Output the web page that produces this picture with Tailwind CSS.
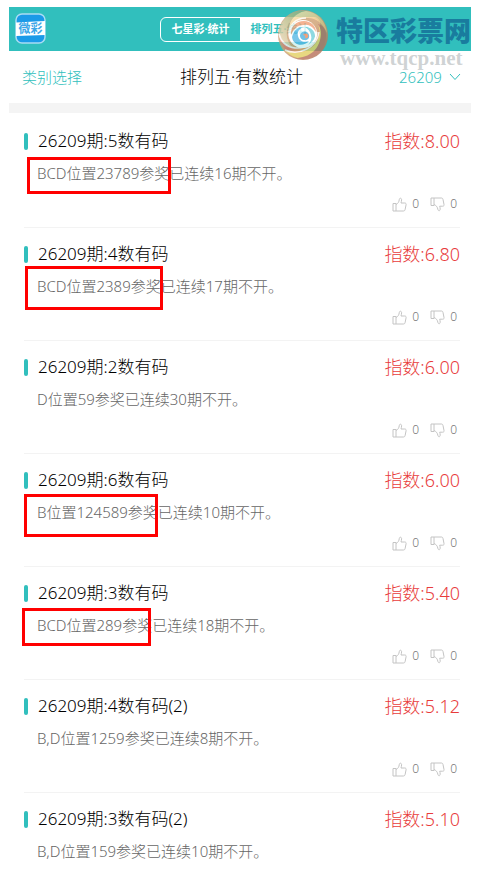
<!DOCTYPE html>
<html lang="zh-CN">
<head>
  <meta charset="utf-8" />
  <meta name="viewport" content="width=device-width, initial-scale=1" />
  <title>排列五·有数统计</title>
  <script src="https://cdn.jsdelivr.net/npm/@tailwindcss/browser@4"></script>
</head>
<body class="bg-white px-[9px] pt-[7px] font-['Noto_Sans','Noto_Sans_CJK_SC',sans-serif] font-light text-black">
  <svg class="hidden">
    <symbol id="up" viewBox="0 0 15 15">
      <path d="M1 6.500h3v7.500H1zM4 7.500c2-1 3-2.500 3.300-5C7.500.7 9.600.8 9.600 2.800c0 1.200-.4 2.200-.6 3.200h3.700c1.200 0 1.600.8 1.400 1.700l-1 4.800c-.2 1-.8 1.500-1.700 1.500H4" fill="none" stroke="currentColor" />
    </symbol>
    <symbol id="down" viewBox="0 0 15 15">
      <path d="M1 1h3v7.500H1zM4 7.500c2 1 3.300 2 3.800 4.500.3 2.400 2.400 2.200 2.400 0 0-1-.3-1.800-.5-2.800h3c1.200 0 1.500-.8 1.300-1.700l-1-5C12.800 1.500 12.300 1 11.400 1H4" fill="none" stroke="currentColor" />
    </symbol>
  </svg>

  <header class="relative flex h-11 items-center justify-center bg-[#31bfbd]">
    <a href="#" aria-label="微彩" class="absolute left-[6px] top-[6px]">
      <svg class="size-[31px]" viewBox="0 0 31 31">
        <rect x="1" y="1" width="29" height="29" rx="6" fill="#1b9ae8" stroke="#a9dcf3" stroke-width="1.500" />
        <path d="M1 9.500L30 8v14L1 23z" fill="#fff" />
        <text x="15.500" y="20" text-anchor="middle" font-size="12" font-weight="700" fill="#3ba6e8" font-family="Noto Sans CJK SC, sans-serif">微彩</text>
      </svg>
    </a>
    <nav class="flex h-[25px] w-40 overflow-hidden rounded-md border border-white text-[11px] font-bold">
      <a href="#" class="flex flex-1 items-center justify-center text-white">七星彩·统计</a>
      <a href="#" class="flex flex-1 items-center justify-center bg-white text-[#31bfbd]">排列五·统计</a>
    </nav>

    <div class="absolute right-0 top-[2px] flex gap-2 whitespace-nowrap">
      <svg class="h-[53px] w-[52px] opacity-80" viewBox="0 0 52 53">
        <defs>
          <linearGradient id="ring" x1="0" y1="0" x2="1" y2="1">
            <stop offset="0" stop-color="#c99a7c" />
            <stop offset=".5" stop-color="#cfa070" />
            <stop offset="1" stop-color="#a8604c" />
          </linearGradient>
          <linearGradient id="green" x1="0" y1="1" x2="1" y2="0">
            <stop offset="0" stop-color="#f3d9b8" />
            <stop offset=".6" stop-color="#b5b983" />
            <stop offset="1" stop-color="#8fae7f" />
          </linearGradient>
          <linearGradient id="red" x1="0" y1="0" x2="1" y2="1">
            <stop offset="0" stop-color="#f4a58c" />
            <stop offset=".5" stop-color="#e8735f" />
            <stop offset="1" stop-color="#f0cf5a" />
          </linearGradient>
          <linearGradient id="gold" x1="0" y1="0" x2="1" y2="1">
            <stop offset="0" stop-color="#fbe9b0" />
            <stop offset="1" stop-color="#e9a863" />
          </linearGradient>
        </defs>
        <ellipse cx="27" cy="26" rx="25" ry="25" fill="url(#ring)" />
        <path d="M3 22C5 9 17 0 30 2c-11 3-18 10-19 20-1 6 1 12 5 16C8 36 3 30 3 22z" fill="url(#green)" />
        <path d="M30 2c11 1 20 10 21 22-4-10-12-16-21-15-10 1-17 8-17 17-2-12 5-22 17-24z" fill="url(#gold)" />
        <path d="M3 25c2 8 8 13 16 14 9 1 16-3 19-9-1 9-8 15-17 15C11 45 4 37 3 25z" fill="url(#red)" />
        <path d="M9 41c12 6 27 2 33-11 2-5 2-10 0-14 6 6 7 16 2 24-8 12-25 13-35 1z" fill="#e3cf62" />
        <path d="M50 24c1 14-8 25-22 26-3 0-6 0-9-1 15 0 25-9 26-24 0-4-1-7-3-10 5 1 7 5 8 9z" fill="#b7705a" />
        <circle cx="27" cy="25" r="14" fill="#fff" />
        <path d="M15 26c-1-8 5-14 13-14 7 0 12 5 12 11-3-5-7-8-12-7-7 0-11 5-13 10z" fill="#f2a077" />
        <path d="M16 28c2-7 6-10 11-10-4 2-6 5-5 9 1 5 6 7 11 5-5 6-16 5-17-4z" fill="#58b9e4" />
        <path d="M29 18c6 0 10 4 10 9 0 4-3 8-7 9 3-3 4-7 3-10-1-4-3-6-6-8z" fill="#72d0dc" />
        <path d="M24 27c0-4 5-6 8-3 3 4 0 8-4 7-2 0-4-2-4-4z" fill="#4fb3e0" />
        <path d="M27 26c1-2 4-2 5 0s-1 4-3 3c1-1 0-3-2-3z" fill="#f08a5a" />
        <path d="M30 9c-10 0-18 7-17 17 1 8 8 13 15 12M3 25c2 8 8 13 16 14 12 1 21-6 22-16M9 41c14 6 32-2 34-18" fill="none" stroke="#fff" stroke-width="1.500" stroke-opacity=".85" />
      </svg>
      <div>
        <p class="pt-[7px] text-[27px] font-black leading-[30px] text-[#197c9e]">特区彩票网</p>
        <p class="mt-[2px] pl-1 font-['Liberation_Serif',serif] text-[21px] font-bold leading-5 text-[#c9cdce]/90">www.tqcp.net</p>
      </div>
    </div>
  </header>

  <div class="grid h-[52px] grid-cols-[1fr_auto_1fr] items-center pl-[13px] pr-[10px] text-[15px] text-[#31bfbd]">
    <button type="button" class="justify-self-start">类别选择</button>
    <h1 class="text-[17px] text-black">排列五·有数统计</h1>
    <label class="relative flex items-center justify-self-end">
      <select aria-label="期号" class="w-[62px] appearance-none bg-transparent">
        <option>26209</option>
      </select>
      <svg class="pointer-events-none absolute right-0 h-2 w-3" viewBox="0 0 12 8"><path d="M1 1l5 5.500L11 1" fill="none" stroke="currentColor" /></svg>
    </label>
  </div>
  <div class="h-[10px] bg-[#f4f4f4]"></div>

  <main class="pl-[15px] pr-[11px]">
    <article class="h-[115px] border-b border-[#f3f3f3] pt-4">
      <div class="flex h-6 items-center">
        <span class="h-[17px] w-1 rounded-sm bg-[#31bfbd]"></span>
        <h2 class="ml-[10px] flex-1 text-[17px]">26209期:5数有码</h2>
        <span class="text-[18px] text-[#e83c3c]">指数:8.00</span>
      </div>
      <div class="relative mt-2 pl-[13px] text-[15px] leading-6 text-[#666]">
        <p>BCD位置23789参奖已连续16期不开。</p>
        <span class="absolute left-[3px] -top-1 h-[37px] w-36 border-3 border-[#f00]"></span>
      </div>
      <div class="mt-[11px] flex items-center justify-end gap-[11px] pr-[3px] text-xs text-[#777]">
        <button type="button" aria-label="赞" class="flex items-center gap-[5px]"><svg class="size-[15px] text-[#c4c4c4]"><use href="#up" /></svg>0</button>
        <button type="button" aria-label="踩" class="flex items-center gap-[5px]"><svg class="size-[15px] text-[#c4c4c4]"><use href="#down" /></svg>0</button>
      </div>
    </article>

    <article class="h-[113px] border-b border-[#f3f3f3] pt-[14px]">
      <div class="flex h-6 items-center">
        <span class="h-[17px] w-1 rounded-sm bg-[#31bfbd]"></span>
        <h2 class="ml-[10px] flex-1 text-[17px]">26209期:4数有码</h2>
        <span class="text-[18px] text-[#e83c3c]">指数:6.80</span>
      </div>
      <div class="relative mt-2 pl-[13px] text-[15px] leading-6 text-[#666]">
        <p>BCD位置2389参奖已连续17期不开。</p>
        <span class="absolute left-px -top-2 h-11 w-[138px] border-3 border-[#f00]"></span>
      </div>
      <div class="mt-[11px] flex items-center justify-end gap-[11px] pr-[3px] text-xs text-[#777]">
        <button type="button" aria-label="赞" class="flex items-center gap-[5px]"><svg class="size-[15px] text-[#c4c4c4]"><use href="#up" /></svg>0</button>
        <button type="button" aria-label="踩" class="flex items-center gap-[5px]"><svg class="size-[15px] text-[#c4c4c4]"><use href="#down" /></svg>0</button>
      </div>
    </article>

    <article class="h-[113px] border-b border-[#f3f3f3] pt-[14px]">
      <div class="flex h-6 items-center">
        <span class="h-[17px] w-1 rounded-sm bg-[#31bfbd]"></span>
        <h2 class="ml-[10px] flex-1 text-[17px]">26209期:2数有码</h2>
        <span class="text-[18px] text-[#e83c3c]">指数:6.00</span>
      </div>
      <div class="mt-2 pl-[13px] text-[15px] leading-6 text-[#666]">
        <p>D位置59参奖已连续30期不开。</p>
      </div>
      <div class="mt-[11px] flex items-center justify-end gap-[11px] pr-[3px] text-xs text-[#777]">
        <button type="button" aria-label="赞" class="flex items-center gap-[5px]"><svg class="size-[15px] text-[#c4c4c4]"><use href="#up" /></svg>0</button>
        <button type="button" aria-label="踩" class="flex items-center gap-[5px]"><svg class="size-[15px] text-[#c4c4c4]"><use href="#down" /></svg>0</button>
      </div>
    </article>

    <article class="h-[113px] border-b border-[#f3f3f3] pt-[14px]">
      <div class="flex h-6 items-center">
        <span class="h-[17px] w-1 rounded-sm bg-[#31bfbd]"></span>
        <h2 class="ml-[10px] flex-1 text-[17px]">26209期:6数有码</h2>
        <span class="text-[18px] text-[#e83c3c]">指数:6.00</span>
      </div>
      <div class="relative mt-2 pl-[13px] text-[15px] leading-6 text-[#666]">
        <p>B位置124589参奖已连续10期不开。</p>
        <span class="absolute left-0 -top-[6px] h-[43px] w-[134px] border-3 border-[#f00]"></span>
      </div>
      <div class="mt-[11px] flex items-center justify-end gap-[11px] pr-[3px] text-xs text-[#777]">
        <button type="button" aria-label="赞" class="flex items-center gap-[5px]"><svg class="size-[15px] text-[#c4c4c4]"><use href="#up" /></svg>0</button>
        <button type="button" aria-label="踩" class="flex items-center gap-[5px]"><svg class="size-[15px] text-[#c4c4c4]"><use href="#down" /></svg>0</button>
      </div>
    </article>

    <article class="h-[113px] border-b border-[#f3f3f3] pt-[14px]">
      <div class="flex h-6 items-center">
        <span class="h-[17px] w-1 rounded-sm bg-[#31bfbd]"></span>
        <h2 class="ml-[10px] flex-1 text-[17px]">26209期:3数有码</h2>
        <span class="text-[18px] text-[#e83c3c]">指数:5.40</span>
      </div>
      <div class="relative mt-2 pl-[13px] text-[15px] leading-6 text-[#666]">
        <p>BCD位置289参奖已连续18期不开。</p>
        <span class="absolute -left-[2px] -top-[5px] h-[38px] w-[129px] border-3 border-[#f00]"></span>
      </div>
      <div class="mt-[11px] flex items-center justify-end gap-[11px] pr-[3px] text-xs text-[#777]">
        <button type="button" aria-label="赞" class="flex items-center gap-[5px]"><svg class="size-[15px] text-[#c4c4c4]"><use href="#up" /></svg>0</button>
        <button type="button" aria-label="踩" class="flex items-center gap-[5px]"><svg class="size-[15px] text-[#c4c4c4]"><use href="#down" /></svg>0</button>
      </div>
    </article>

    <article class="h-[113px] border-b border-[#f3f3f3] pt-[14px]">
      <div class="flex h-6 items-center">
        <span class="h-[17px] w-1 rounded-sm bg-[#31bfbd]"></span>
        <h2 class="ml-[10px] flex-1 text-[17px]">26209期:4数有码(2)</h2>
        <span class="text-[18px] text-[#e83c3c]">指数:5.12</span>
      </div>
      <div class="mt-2 pl-[13px] text-[15px] leading-6 text-[#666]">
        <p>B,D位置1259参奖已连续8期不开。</p>
      </div>
      <div class="mt-[11px] flex items-center justify-end gap-[11px] pr-[3px] text-xs text-[#777]">
        <button type="button" aria-label="赞" class="flex items-center gap-[5px]"><svg class="size-[15px] text-[#c4c4c4]"><use href="#up" /></svg>0</button>
        <button type="button" aria-label="踩" class="flex items-center gap-[5px]"><svg class="size-[15px] text-[#c4c4c4]"><use href="#down" /></svg>0</button>
      </div>
    </article>

    <article class="pt-[14px]">
      <div class="flex h-6 items-center">
        <span class="h-[17px] w-1 rounded-sm bg-[#31bfbd]"></span>
        <h2 class="ml-[10px] flex-1 text-[17px]">26209期:3数有码(2)</h2>
        <span class="text-[18px] text-[#e83c3c]">指数:5.10</span>
      </div>
      <div class="mt-2 pl-[13px] text-[15px] leading-6 text-[#666]">
        <p>B,D位置159参奖已连续10期不开。</p>
      </div>
    </article>
  </main>
</body>
</html>
